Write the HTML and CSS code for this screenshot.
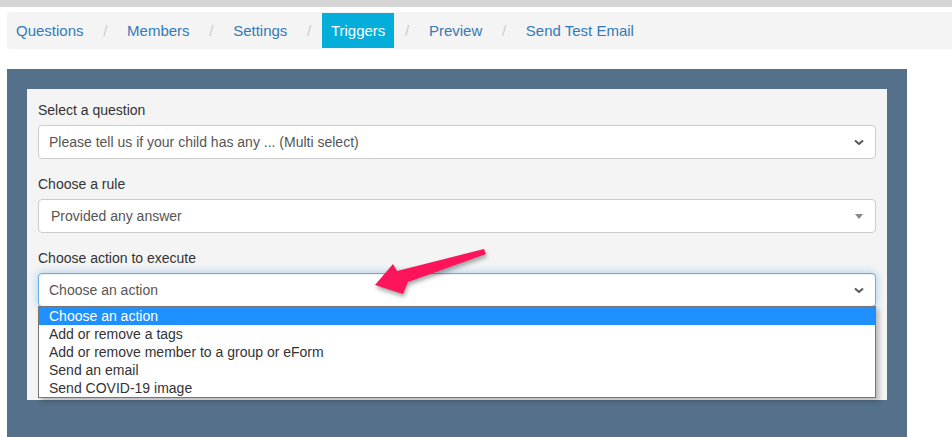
FILE: index.html
```html
<!DOCTYPE html>
<html lang="en">
<head>
  <meta charset="UTF-8">
  <meta name="viewport" content="width=device-width, initial-scale=1.0">
  <title>Triggers</title>
  <link rel="stylesheet" href="styles.css">
</head>
<body>
  <div class="topbar"></div>

  <ul class="steps">
    <li><a href="#">Questions</a></li>
    <li class="sep">/</li>
    <li><a href="#">Members</a></li>
    <li class="sep">/</li>
    <li><a href="#">Settings</a></li>
    <li class="sep">/</li>
    <li class="active"><a href="#">Triggers</a></li>
    <li class="sep">/</li>
    <li><a href="#">Preview</a></li>
    <li class="sep">/</li>
    <li><a href="#">Send Test Email</a></li>
  </ul>

  <div class="panel">
    <div class="card">
      <div class="field">
        <label>Select a question</label>
        <div class="select">
          <span class="value">Please tell us if your child has any ... (Multi select)</span>
          <svg class="chevron" width="10" height="7" viewBox="0 0 10 7"><path d="M1 1.5 L5 5 L9 1.5" fill="none" stroke="#555" stroke-width="2"/></svg>
        </div>
      </div>

      <div class="field">
        <label>Choose a rule</label>
        <div class="select select2">
          <span class="value">Provided any answer</span>
          <span class="caret"></span>
        </div>
      </div>

      <div class="field">
        <label>Choose action to execute</label>
        <div class="select focused">
          <span class="value">Choose an action</span>
          <svg class="chevron" width="10" height="7" viewBox="0 0 10 7"><path d="M1 1.5 L5 5 L9 1.5" fill="none" stroke="#555" stroke-width="2"/></svg>
          <ul class="options">
            <li class="selected">Choose an action</li>
            <li>Add or remove a tags</li>
            <li>Add or remove member to a group or eForm</li>
            <li>Send an email</li>
            <li>Send COVID-19 image</li>
          </ul>
        </div>
      </div>
    </div>
  </div>

  <!-- annotation arrow pointing at the action dropdown -->
  <svg class="pointer" width="140" height="70" viewBox="360 240 140 70">
    <polygon points="375,285 393,264 397,271 484,249 486,254 408,282 403,294" fill="#fd145b"/>
  </svg>
</body>
</html>
```

FILE: styles.css
```css
body {
  margin: 0;
  font-family: "Liberation Sans", Arial, sans-serif;
  font-size: 14px;
  color: #333;
  background: #fff;
  position: relative;
  height: 437px;
  overflow: hidden;
}
.topbar {
  height: 7px;
  background: #d5d5d5;
}
.steps {
  list-style: none;
  display: flex;
  margin: 5px 0 0 7px;
  padding: 1px 0;
  background: #f4f4f4;
  border-radius: 4px 0 0 4px;
  font-size: 15px;
  line-height: 35px;
}
.steps a {
  display: block;
  padding: 0 9px;
  color: #337ab7;
  text-decoration: none;
}
.steps .sep {
  padding: 0 10.7px;
  color: #ccc;
}
.steps .active a {
  background: #03aedb;
  color: #fff;
}
.panel {
  margin: 20px 0 0 7px;
  width: 860px;
  padding: 20px 20px 37px;
  background: #55708a;
}
.card {
  background: #f4f4f4;
  padding: 11px 11px 93px;
  display: flex;
  flex-direction: column;
  gap: 15px;
}
.field label {
  display: block;
  line-height: 20px;
  margin-bottom: 5px;
}
.select {
  position: relative;
  height: 32px;
  background: #fff;
  border: 1px solid #ccc;
  border-radius: 4px;
  display: flex;
  align-items: center;
  padding: 0 10px;
  color: #555;
}
.select2 {
  padding-left: 12px;
}
.select .value {
  flex: 1;
}
.chevron {
  margin-right: 1px;
}
.caret {
  width: 0;
  height: 0;
  border-style: solid;
  border-width: 5px 4px 0 4px;
  border-color: #888 transparent transparent transparent;
  margin-right: 2px;
}
.focused {
  border-color: #66afe9;
  box-shadow: inset 0 1px 1px rgba(0, 0, 0, 0.075), 0 0 8px rgba(102, 175, 233, 0.6);
}
.options {
  position: absolute;
  top: 32px;
  left: -1px;
  right: -1px;
  margin: 0;
  padding: 0;
  list-style: none;
  background: #fff;
  border: 1px solid #767676;
  box-shadow: 3px 3px 5px rgba(0, 0, 0, 0.25);
  color: #333;
  line-height: 18px;
}
.options li {
  padding-left: 10px;
}
.options .selected {
  background: #1e90ff;
  color: #fff;
}
.pointer {
  position: absolute;
  left: 360px;
  top: 240px;
  filter: drop-shadow(1px 3px 2px rgba(0, 0, 0, 0.35));
}
```
